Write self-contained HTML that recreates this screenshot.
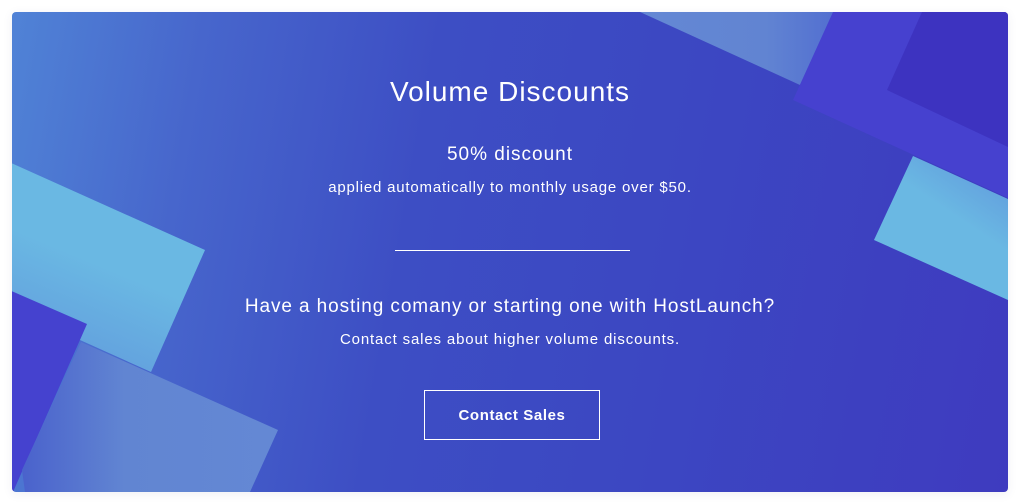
<!DOCTYPE html>
<html><head><meta charset="utf-8"><style>
html,body{margin:0;padding:0;background:#fff;width:1020px;height:504px;overflow:hidden}
.card{position:absolute;left:12px;top:12px;width:996px;height:480px;border-radius:4px;overflow:hidden;box-shadow:0 2px 10px rgba(60,60,120,0.08);
background:linear-gradient(100deg,#5083d6 0%,#4766cc 18%,#3d4ec4 40%,#3c47c2 65%,#3e3bbf 100%)}
svg{position:absolute;left:0;top:0}
.t{position:absolute;left:0;width:996px;text-align:center;color:#fff;font-family:"Liberation Sans",sans-serif;white-space:nowrap}
.btn{position:absolute;left:412px;top:378px;width:174px;height:48px;border:1px solid #fff;color:#fff;font:bold 15px "Liberation Sans",sans-serif;letter-spacing:0.6px;display:flex;align-items:center;justify-content:center}
.hr{position:absolute;left:383px;top:238px;width:235px;height:1px;background:#fff}
</style></head><body>
<div class="card">
<svg width="996" height="480" viewBox="12 12 996 480">
<defs>
<linearGradient id="cy" x1="0" y1="1" x2="0.4" y2="0"><stop offset="0" stop-color="#5f95db"/><stop offset="0.6" stop-color="#6ab8e3"/></linearGradient>
<linearGradient id="lt" x1="0" y1="0" x2="1" y2="0"><stop offset="0" stop-color="#4a62cc"/><stop offset="0.4" stop-color="#6185d2"/><stop offset="1" stop-color="#6488d4"/></linearGradient>
<linearGradient id="tl" x1="0" y1="0" x2="1" y2="0"><stop offset="0" stop-color="#6488d4"/><stop offset="0.6" stop-color="#6184d2"/><stop offset="1" stop-color="#4f6ad0"/></linearGradient>
<linearGradient id="cy2" x1="1" y1="0" x2="0.5" y2="0.8"><stop offset="0" stop-color="#5f94db"/><stop offset="0.6" stop-color="#6ab8e3"/></linearGradient>
</defs>
<polygon points="0,158 205,250 151,372 0,304" fill="url(#cy)"/>
<polygon points="0,286 87,324 13,492 0,492" fill="#4542cf"/>
<polygon points="81,342 278,430 250,492 25,492 22,470" fill="url(#lt)"/>
<polygon points="640,12 850,12 800,85" fill="url(#tl)"/>
<polygon points="833,12 1008,12 1008,198 793,100" fill="#4641cf"/>
<polygon points="922,12 1008,12 1008,147 887,90" fill="#3d33c0"/>
<polygon points="913,156 1008,199 1008,300 874,240" fill="url(#cy2)"/>
</svg>
<div class="t" style="top:64px;font-size:28px;letter-spacing:1px">Volume Discounts</div>
<div class="t" style="top:132px;font-size:19px;letter-spacing:1px">50% discount</div>
<div class="t" style="top:167px;font-size:15px;letter-spacing:0.8px">applied automatically to monthly usage over $50.</div>
<div class="hr"></div>
<div class="t" style="top:284px;font-size:19px;letter-spacing:0.9px">Have a hosting comany or starting one with HostLaunch?</div>
<div class="t" style="top:319px;font-size:15px;letter-spacing:0.85px">Contact sales about higher volume discounts.</div>
<div class="btn">Contact Sales</div>
</div>
</body></html>
